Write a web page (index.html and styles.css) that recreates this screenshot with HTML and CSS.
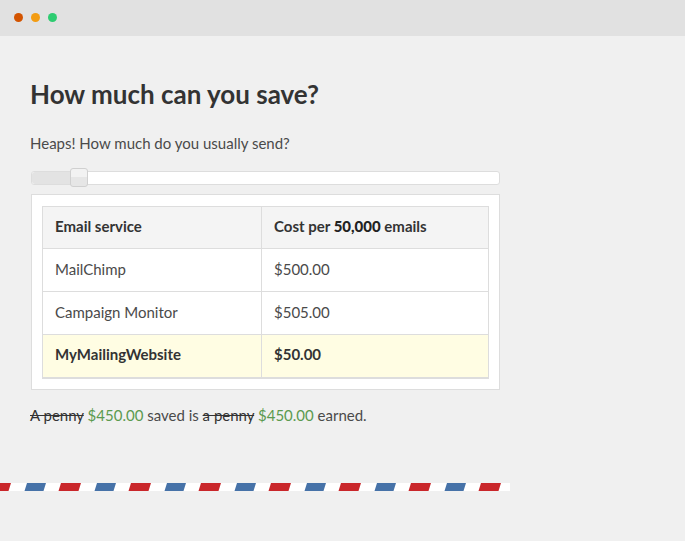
FILE: index.html
```html
<!DOCTYPE html>
<html lang="en">
<head>
<meta charset="utf-8">
<title>How much can you save?</title>
<link rel="stylesheet" href="styles.css">
</head>
<body>
<div class="window">
  <div class="titlebar">
    <span class="dot dot-red"></span>
    <span class="dot dot-orange"></span>
    <span class="dot dot-green"></span>
  </div>
  <main class="content">
    <h1 class="title">How much can you save?</h1>
    <p class="lead">Heaps! How much do you usually send?</p>
    <div class="slider">
      <div class="slider-fill"></div>
      <div class="slider-handle"></div>
    </div>
    <div class="table-box">
      <table class="pricing">
        <thead>
          <tr><th>Email service</th><th>Cost per <b>50,000</b> emails</th></tr>
        </thead>
        <tbody>
          <tr><td>MailChimp</td><td>$500.00</td></tr>
          <tr><td>Campaign Monitor</td><td>$505.00</td></tr>
          <tr class="highlight"><td>MyMailingWebsite</td><td>$50.00</td></tr>
        </tbody>
      </table>
    </div>
    <p class="summary"><s>A penny</s> <span class="money">$450.00</span> saved is <s>a penny</s> <span class="money">$450.00</span> earned.</p>
  </main>
  <svg class="airmail" width="510" height="8" viewBox="0 0 510 8" aria-hidden="true">
    <defs>
      <pattern id="stripes" x="20" y="0" width="70" height="8" patternUnits="userSpaceOnUse">
        <polygon points="7,0 26,0 23.5,8 4.5,8" fill="#4672a8"/>
        <polygon points="41,0 61,0 58.5,8 38.5,8" fill="#c9262a"/>
      </pattern>
    </defs>
    <rect width="510" height="8" fill="#fff"/>
    <rect width="510" height="8" fill="url(#stripes)"/>
  </svg>
</div>
</body>
</html>
```
FILE: styles.css
```css
* { box-sizing: border-box; }
html, body { margin: 0; padding: 0; }
body {
  background: #f0f0f0;
  font-family: Lato, "Open Sans", sans-serif;
  color: #444;
  width: 685px;
  height: 541px;
  overflow: hidden;
}
.titlebar {
  height: 36px;
  background: #e1e1e1;
  display: flex;
  align-items: center;
  gap: 8px;
  padding-left: 14px;
  padding-bottom: 2px;
}
.dot { width: 9px; height: 9px; border-radius: 50%; display: block; }
.dot-red { background: #d35400; }
.dot-orange { background: #f39c12; }
.dot-green { background: #2ecc71; }

.content { padding: 40px 0 0 31px; width: 500px; }
.title {
  margin: 0 0 0 -1px;
  font-size: 26px;
  line-height: 36px;
  font-weight: 700;
  color: #333;
}
.lead {
  margin: 20px 0 0 -1px;
  font-size: 15px;
  line-height: 22px;
  font-weight: 400;
  color: #4a4a4a;
}
.slider {
  position: relative;
  margin-top: 17px;
  width: 469px;
  height: 14px;
  background: #fff;
  border: 1px solid #ddd;
  border-radius: 3px;
}
.slider-fill {
  width: 45px;
  height: 100%;
  background: #e3e3e3;
  border-radius: 3px 0 0 3px;
}
.slider-handle {
  position: absolute;
  left: 38px;
  top: -4px;
  width: 18px;
  height: 19px;
  border: 1px solid #d0d0d0;
  border-radius: 3px;
  background: linear-gradient(#f2f2f2 0 50%, #e6e6e6 50% 100%);
}
.table-box {
  margin-top: 9px;
  width: 469px;
  background: #fff;
  border: 1px solid #ddd;
  padding: 11px 10px 10px;
}
.pricing {
  width: 447px;
  border-collapse: collapse;
  font-size: 15px;
  color: #444;
}
.pricing th, .pricing td {
  border: 1px solid #ddd;
  height: 43px;
  padding: 0 12px 3px;
  text-align: left;
  vertical-align: middle;
}
.pricing th:first-child, .pricing td:first-child { width: 219px; }
.pricing th {
  background: #f4f4f4;
  font-weight: 700;
  color: #333;
  height: 42px;
}
.pricing th b { font-weight: 900; color: #222; }
.pricing td { font-weight: 400; color: #4a4a4a; }
.pricing tr.highlight td {
  background: #fffde3;
  font-weight: 700;
  color: #333;
  border-bottom: 2px solid #ddd;
}
.summary {
  margin: 15px 0 0 -1px;
  font-size: 15px;
  line-height: 20px;
  font-weight: 400;
  color: #4a4a4a;
}
.summary s { color: #333; }
.money { color: #5b9a4f; }
.airmail {
  display: block;
  margin-top: 58px;
}
```
